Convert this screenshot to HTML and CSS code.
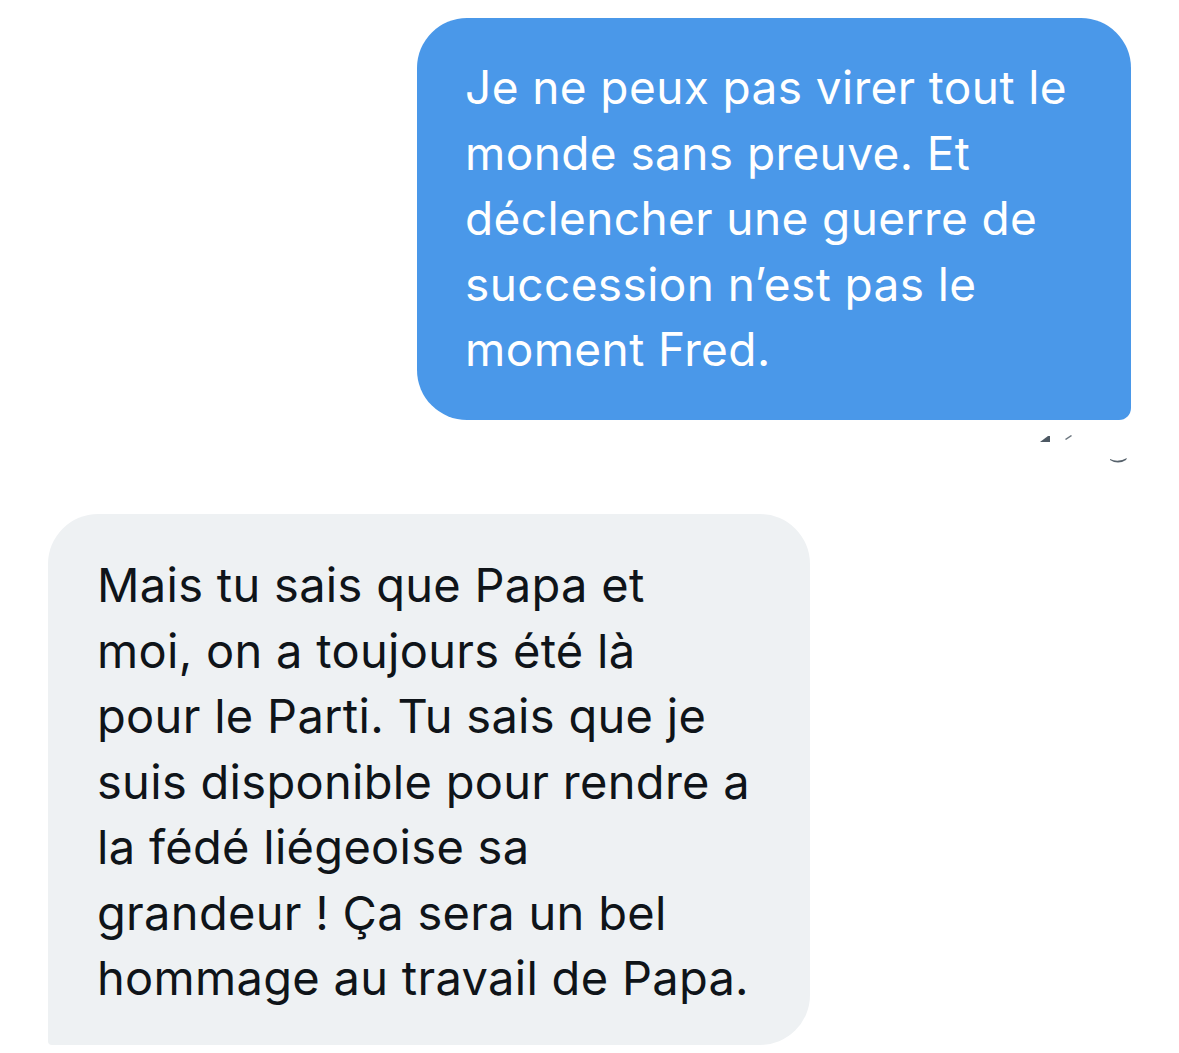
FILE: index.html
```html
<!DOCTYPE html>
<html lang="fr">
<head>
<meta charset="utf-8">
<link rel="stylesheet" href="styles.css">
</head>
<body>
<div class="chat">
  <div class="row row-out">
    <div class="bubble out">Je ne peux pas virer tout le<br>monde sans preuve. Et<br>déclencher une guerre de<br>succession n’est pas le<br>moment Fred.</div>
  </div>
  <div class="meta">
    <svg class="marks" width="110" height="50" viewBox="0 0 110 50">
      <path d="M10 17 L18 11 L20 11 L20 17 Z" fill="#4d5863"/>
      <path d="M35 14 L41 10 L42 11 L36 15 Z" fill="#6b757e"/>
      <path d="M80 34 Q88 38 97 33 L96 35 Q88 40 80 35 Z" fill="#56616b"/>
    </svg>
  </div>
  <div class="row row-in">
    <div class="bubble in">Mais tu sais que Papa et<br>moi, on a toujours été là<br>pour le Parti. Tu sais que je<br>suis disponible pour rendre a<br>la fédé liégeoise sa<br>grandeur ! Ça sera un bel<br>hommage au travail de Papa.</div>
  </div>
</div>
</body>
</html>
```
FILE: styles.css
```css
html, body {
  margin: 0;
  padding: 0;
  background: #ffffff;
}
.chat {
  width: 1179px;
  height: 1053px;
  overflow: hidden;
  display: flex;
  flex-direction: column;
  font-family: Inter, "Noto Sans", sans-serif;
}
.row {
  display: flex;
}
.row-out {
  padding-top: 18px;
  padding-left: 417px;
}
.row-in {
  padding-left: 48px;
}
.bubble {
  line-height: 65.5px;
  white-space: nowrap;
  box-sizing: border-box;
}
.out {
  width: 714px;
  height: 402px;
  background: #4a98e9;
  color: #ffffff;
  font-size: 46px;
  letter-spacing: 0.4px;
  padding: 37px 0 0 48px;
  border-radius: 50px 50px 12px 50px;
}
.in {
  width: 762px;
  height: 531px;
  background: #eef1f3;
  color: #0f1419;
  font-size: 47px;
  letter-spacing: 0.3px;
  padding: 38px 0 0 49px;
  border-radius: 50px 50px 50px 4px;
}
.meta {
  height: 94px;
  display: flex;
  justify-content: flex-end;
  align-items: flex-start;
  padding-right: 39px;
  padding-top: 5px;
  box-sizing: border-box;
}
.marks {
  display: block;
}
```
